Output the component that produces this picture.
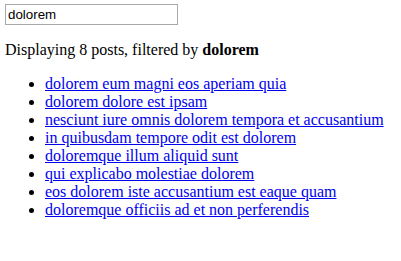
import { useState } from 'react';

const posts = [
  'dolorem eum magni eos aperiam quia',
  'dolorem dolore est ipsam',
  'nesciunt iure omnis dolorem tempora et accusantium',
  'in quibusdam tempore odit est dolorem',
  'doloremque illum aliquid sunt',
  'qui explicabo molestiae dolorem',
  'eos dolorem iste accusantium est eaque quam',
  'doloremque officiis ad et non perferendis',
];

export default function App() {
  const [filter, setFilter] = useState('dolorem');
  const visible = posts.filter((p) => p.includes(filter));

  return (
    <div className="px-[5px] pt-[4px] font-['Liberation_Serif',serif] text-[16px] leading-[18px] text-black">
      {/* Filter input */}
      <div>
        <input
          value={filter}
          onChange={(e) => setFilter(e.target.value)}
          className="w-[173px] h-[21px] border border-[#a9a9a9] px-[2px] py-[1px] font-['Liberation_Sans',Arial,sans-serif] text-[13.333px] leading-normal outline-none"
        />
      </div>

      <p className="mt-[16px]">
        Displaying {visible.length} posts, filtered by <b className="font-bold">{filter}</b>
      </p>

      <ul className="mt-[16px] pl-[40px] list-disc">
        {visible.map((title) => (
          <li key={title}>
            <a href="#" className="text-[#0000ee] underline">
              {title}
            </a>
          </li>
        ))}
      </ul>
    </div>
  );
}
